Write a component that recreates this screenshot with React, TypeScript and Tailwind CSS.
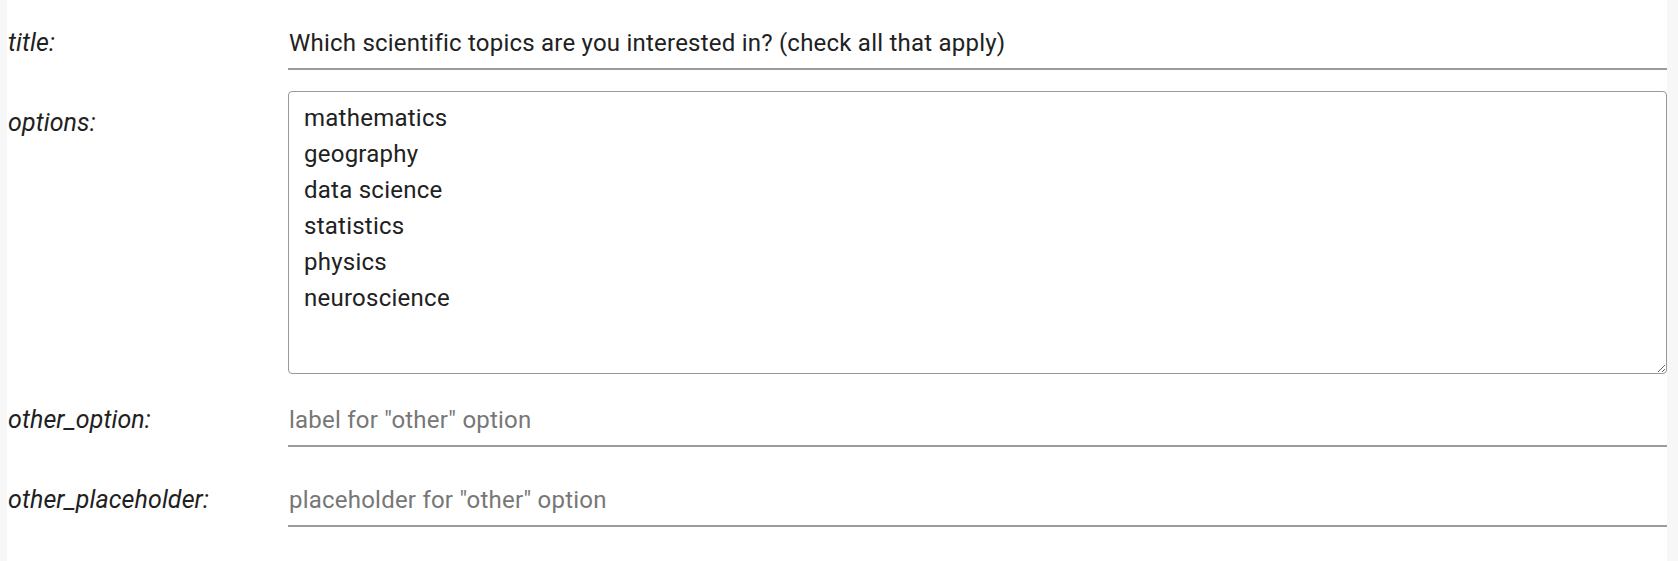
import React from "react";

const font = { fontFamily: "Roboto, 'Noto Sans', Arial, sans-serif" };

function Label({ text, pt }: { text: string; pt: string }) {
  return (
    <div className={`w-[281px] shrink-0 pl-[1px] ${pt} text-[25px] leading-[36px] tracking-[0.1px] italic text-[#212121]`}>
      {text}
    </div>
  );
}

function LineInput({ value, placeholder }: { value?: string; placeholder?: string }) {
  return (
    <input
      readOnly
      defaultValue={value}
      placeholder={placeholder}
      className="block w-full flex-1 border-0 border-b-2 border-solid border-[#9b9b9b] bg-transparent pl-[1px] pt-[7px] pb-[7px] text-[24px] leading-[36px] tracking-[0.22px] text-[#212121] outline-none placeholder:text-[#777777]"
      style={font}
    />
  );
}

export default function App() {
  const options = ["mathematics", "geography", "data science", "statistics", "physics", "neuroscience"].join("\n");
  return (
    <div className="flex min-h-[561px] w-full bg-white" style={font}>
      <div className="w-[7px] shrink-0 bg-[#f7f7f7]" />
      <div className="flex flex-1 flex-col pt-[18px]">
        <div className="flex items-start">
          <Label text="title:" pt="pt-[7px]" />
          <LineInput value="Which scientific topics are you interested in? (check all that apply)" />
        </div>
        <div className="mt-[21px] flex items-start">
          <Label text="options:" pt="pt-[14px]" />
          <textarea
            readOnly
            defaultValue={options}
            className="block h-[283px] flex-1 rounded-[4px] border border-solid border-[#999999] bg-white pl-[15px] pr-4 pt-[8px] text-[24px] leading-[36px] tracking-[0.25px] text-[#212121] outline-none"
            style={font}
          />
        </div>
        <div className="mt-[21px] flex items-start">
          <Label text="other_option:" pt="pt-[7px]" />
          <LineInput placeholder={'label for "other" option'} />
        </div>
        <div className="mt-[28px] flex items-start">
          <Label text="other_placeholder:" pt="pt-[7px]" />
          <LineInput placeholder={'placeholder for "other" option'} />
        </div>
      </div>
      <div className="w-[11px] shrink-0 bg-[#f7f7f7]" />
    </div>
  );
}
